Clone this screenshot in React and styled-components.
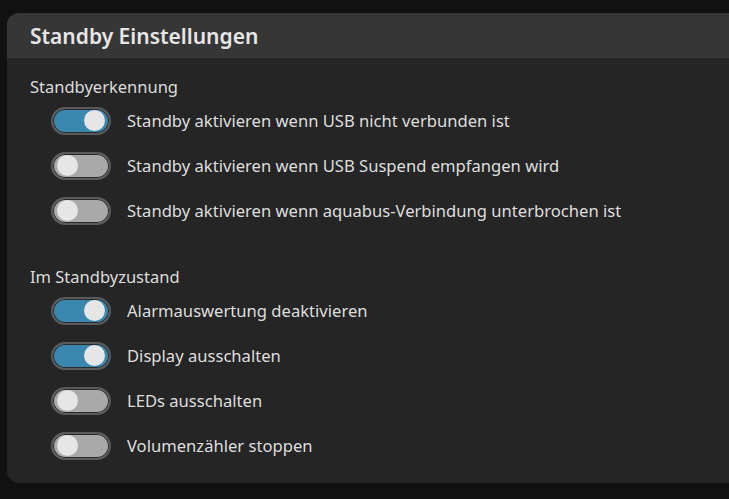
import React from 'react'
import styled, { createGlobalStyle } from 'styled-components'

const GlobalStyle = createGlobalStyle`
  html, body {
    margin: 0;
    padding: 0;
    background: #111111;
    overflow: hidden;
  }
  body {
    font-family: "Noto Sans", "Open Sans", sans-serif;
  }
`

const Page = styled.div`
  width: 729px;
  height: 499px;
  padding: 13px 0 0 7px;
  box-sizing: border-box;
  overflow: hidden;
`

const Card = styled.div`
  width: 740px;
  height: 470px;
  background: #252525;
  border-radius: 12px;
  overflow: hidden;
`

const Header = styled.div`
  height: 45px;
  background: #363636;
  display: flex;
  align-items: center;
  padding-left: 23px;
`

const Title = styled.h1`
  margin: 0;
  font-size: 21px;
  font-weight: 600;
  color: #e6e6e6;
`

const Body = styled.div`
  padding: 18px 0 0 23px;
`

const Section = styled.div`
  margin-bottom: ${p => p.$gap || 0}px;
`

const SectionLabel = styled.div`
  font-size: 16.5px;
  line-height: 22px;
  color: #dcdcdc;
`

const Row = styled.div`
  height: 45px;
  display: flex;
  align-items: center;
  padding-left: 21px;
`

const Track = styled.div`
  width: 60px;
  height: 28px;
  box-sizing: border-box;
  border-radius: 14px;
  border: 2px solid #5a5a5a;
  background: ${p => (p.$on ? '#3a87b0' : '#a9a9a9')};
  box-shadow: inset 0 0 0 1px #2a2a2a;
  display: flex;
  align-items: center;
  justify-content: ${p => (p.$on ? 'flex-end' : 'flex-start')};
  padding: 0 4px;
  flex-shrink: 0;
`

const Knob = styled.div`
  width: 21px;
  height: 21px;
  border-radius: 50%;
  background: #e6e6e6;
`

const RowText = styled.span`
  margin-left: 16px;
  font-size: 16.6px;
  color: #dedede;
  white-space: nowrap;
`

function Toggle({ on }) {
  return (
    <Track $on={on}>
      <Knob />
    </Track>
  )
}

const sections = [
  {
    label: 'Standbyerkennung',
    items: [
      ['Standby aktivieren wenn USB nicht verbunden ist', true],
      ['Standby aktivieren wenn USB Suspend empfangen wird', false],
      ['Standby aktivieren wenn aquabus-Verbindung unterbrochen ist', false],
    ],
  },
  {
    label: 'Im Standbyzustand',
    items: [
      ['Alarmauswertung deaktivieren', true],
      ['Display ausschalten', true],
      ['LEDs ausschalten', false],
      ['Volumenzähler stoppen', false],
    ],
  },
]

export default function App() {
  return (
    <Page>
      <GlobalStyle />
      <Card>
        <Header>
          <Title>Standby Einstellungen</Title>
        </Header>
        <Body>
          {sections.map((s, i) => (
            <Section key={s.label} $gap={i === 0 ? 33 : 0}>
              <SectionLabel>{s.label}</SectionLabel>
              {s.items.map(([text, on]) => (
                <Row key={text}>
                  <Toggle on={on} />
                  <RowText>{text}</RowText>
                </Row>
              ))}
            </Section>
          ))}
        </Body>
      </Card>
    </Page>
  )
}
